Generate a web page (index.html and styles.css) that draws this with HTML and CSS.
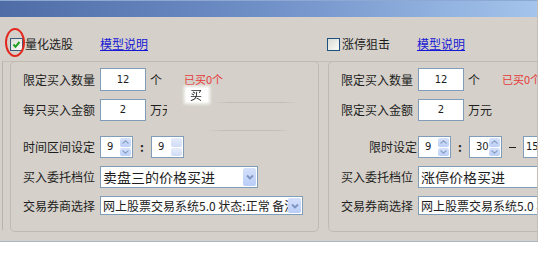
FILE: index.html
```html
<!DOCTYPE html>
<html lang="zh-CN">
<head>
    <meta charset="UTF-8">
    <title>量化选股</title>
    <link rel="stylesheet" href="styles.css">
</head>
<body>
    <div class="window">
        <div class="titlebar"></div>
        <div class="heads">
            <div class="head">
                <span class="mark"></span>
                <span class="check on"><svg width="9" height="9" viewBox="0 0 9 9"><polyline points="1.5,4.5 3.5,6.8 7.5,2" fill="none" stroke="#21a121" stroke-width="2"/></svg></span>
                <span class="head-title">量化选股</span>
                <a class="link" href="#">模型说明</a>
            </div>
            <div class="head">
                <span class="check"></span>
                <span class="head-title">涨停狙击</span>
                <a class="link" href="#">模型说明</a>
            </div>
        </div>
        <div class="panels">
            <div class="group">
                <span class="ghost ghost-a"></span>
                <span class="ghost ghost-b"></span>
                <span class="tip">买<i></i></span>
                <div class="row tall">
                    <span class="label">限定买入数量</span>
                    <span class="box">12</span>
                    <span class="unit">个</span>
                    <span class="bought">已买0个</span>
                </div>
                <div class="row">
                    <span class="label">每只买入金额</span>
                    <span class="box">2</span>
                    <span class="unit cut">万元</span>
                </div>
                <div class="row time">
                    <span class="label">时间区间设定</span>
                    <span class="spin"><span class="spin-val">9</span><span class="spin-btns"><b><svg width="7" height="4" viewBox="0 0 7 4"><polyline points="0.5,3.5 3.5,0.8 6.5,3.5" fill="none" stroke="#8aa0c6" stroke-width="1.2"/></svg></b><b><svg width="7" height="4" viewBox="0 0 7 4"><polyline points="0.5,0.5 3.5,3.2 6.5,0.5" fill="none" stroke="#8aa0c6" stroke-width="1.2"/></svg></b></span></span>
                    <span class="colon">:</span>
                    <span class="spin faded"><span class="spin-val">9</span><span class="spin-btns"><b></b><b></b></span></span>
                </div>
                <div class="row">
                    <span class="label">买入委托档位</span>
                    <span class="select wide-a"><span class="select-text big">卖盘三的价格买进</span><span class="drop"><svg width="8" height="6" viewBox="0 0 8 6"><polyline points="1,1.5 4,4.5 7,1.5" fill="none" stroke="#7d93c0" stroke-width="1.8"/></svg></span></span>
                </div>
                <div class="row short">
                    <span class="label">交易券商选择</span>
                    <span class="select wide-b"><span class="select-text">网上股票交易系统5.0 状态:正常 备注</span><span class="drop"><svg width="8" height="6" viewBox="0 0 8 6"><polyline points="1,1.5 4,4.5 7,1.5" fill="none" stroke="#7d93c0" stroke-width="1.8"/></svg></span></span>
                </div>
            </div>
            <div class="group">
                <div class="row tall">
                    <span class="label">限定买入数量</span>
                    <span class="box">12</span>
                    <span class="unit">个</span>
                    <span class="bought">已买0个</span>
                </div>
                <div class="row">
                    <span class="label">限定买入金额</span>
                    <span class="box">2</span>
                    <span class="unit">万元</span>
                </div>
                <div class="row time">
                    <span class="label right">限时设定</span>
                    <span class="spin"><span class="spin-val">9</span><span class="spin-btns"><b><svg width="7" height="4" viewBox="0 0 7 4"><polyline points="0.5,3.5 3.5,0.8 6.5,3.5" fill="none" stroke="#8aa0c6" stroke-width="1.2"/></svg></b><b><svg width="7" height="4" viewBox="0 0 7 4"><polyline points="0.5,0.5 3.5,3.2 6.5,0.5" fill="none" stroke="#8aa0c6" stroke-width="1.2"/></svg></b></span></span>
                    <span class="colon">:</span>
                    <span class="spin"><span class="spin-val">30</span><span class="spin-btns"><b><svg width="7" height="4" viewBox="0 0 7 4"><polyline points="0.5,3.5 3.5,0.8 6.5,3.5" fill="none" stroke="#8aa0c6" stroke-width="1.2"/></svg></b><b><svg width="7" height="4" viewBox="0 0 7 4"><polyline points="0.5,0.5 3.5,3.2 6.5,0.5" fill="none" stroke="#8aa0c6" stroke-width="1.2"/></svg></b></span></span>
                    <span class="dash"></span>
                    <span class="spin"><span class="spin-val tight">15</span><span class="spin-btns"><b></b><b></b></span></span>
                </div>
                <div class="row">
                    <span class="label">买入委托档位</span>
                    <span class="select wide-c"><span class="select-text big">涨停价格买进</span></span>
                </div>
                <div class="row short">
                    <span class="label">交易券商选择</span>
                    <span class="select wide-c"><span class="select-text">网上股票交易系统5.0 状态:正常</span></span>
                </div>
            </div>
        </div>
    </div>
</body>
</html>
```

FILE: styles.css
```css
* {
    margin: 0;
    padding: 0;
    box-sizing: border-box;
}
body {
    background: #fff;
    font-family: "Noto Sans CJK SC", "Noto Sans", sans-serif;
    font-size: 12px;
    color: #1e1e1e;
    line-height: 1;
}
.window {
    width: 538px;
    height: 242px;
    background: #d5d1ca;
    border-right: 1px solid #c3bfb8;
    border-bottom: 1px solid #a9b5c4;
    overflow: hidden;
}
.titlebar {
    height: 17px;
    background: linear-gradient(to right, #4f6ca7, #7090c8 50%, #a4c4ec);
    border-top: 1px solid #8ea8d4;
}
.heads { display: flex; gap: 10px; padding-left: 10px; height: 44px; }
.head { position: relative; display: flex; align-items: center; width: 307px; flex-shrink: 0; padding-top: 10px; }
.check {
    width: 13px; height: 13px;
    border: 1px solid #1c5180;
    background: linear-gradient(135deg, #dcdcd5, #fbfbf9);
    display: flex; align-items: center; justify-content: center;
}
.check.on { border-color: #3b5c7a; }
.mark {
    position: absolute; left: -5px; top: 11px;
    width: 20px; height: 29px;
    border: 2px solid #e2281f; border-radius: 50%;
}
.head-title { margin-left: 2px; width: 48px; font-size: 12px; }
.link { margin-left: 27px; color: #1818d4; text-decoration: underline; font-size: 12px; }

.panels {
    display: flex; gap: 9px;
    margin-left: 2px;
    padding-left: 7px;
    border-left: 1px solid #b9b5ad;
    border-top: 1px solid #c2beb6;
    height: 169px;
}
.group {
    position: relative;
    width: 309px; height: 171px; flex-shrink: 0;
    margin-top: -1px;
    border: 1px solid #bfbbb3;
    border-radius: 5px;
    padding: 6px 0 0 12px;
    display: flex; flex-direction: column; gap: 8px;
}
.row { display: flex; align-items: center; height: 22px; white-space: nowrap; }
.row.tall { height: 23px; }
.row.time { margin-top: 7px; }
.row.short { height: 19px; }
.label { width: 77px; flex-shrink: 0; font-size: 12px; }
.label.right { text-align: right; padding-right: 1px; }
.box {
    width: 46px; height: 100%;
    background: #fff; border: 1px solid #7f9db9;
    display: flex; align-items: center; justify-content: center;
    font-family: "DejaVu Sans", sans-serif; font-size: 10px;
}
.unit { margin-left: 4px; font-size: 12px; }
.unit.cut { width: 17px; overflow: hidden; }
.bought { margin-left: 22px; color: #e53a3a; font-size: 11px; }

.spin {
    width: 33px; height: 100%; flex-shrink: 0;
    display: flex; background: #fff; border: 1px solid #7f9db9;
}
.spin-val { flex: 1; padding-left: 6px; display: flex; align-items: center; font-family: "DejaVu Sans", sans-serif; font-size: 10px; }
.spin-val.tight { padding-left: 2px; }
.spin-btns { width: 12px; display: flex; flex-direction: column; gap: 1px; padding: 1px 1px 1px 0; }
.spin-btns b {
    flex: 1; border-radius: 2px;
    background: linear-gradient(#d6e2fb, #bccff6);
    display: flex; align-items: center; justify-content: center;
}
.spin.faded .spin-btns b { background: linear-gradient(#e6edfb, #cfdbf6); }
.colon { width: 18px; text-align: center; font-weight: bold; font-size: 12px; }
.dash { width: 7px; height: 1px; background: #222; margin: 0 7px; }

.select {
    height: 100%; display: flex; align-items: center;
    background: #fff; border: 1px solid #7f9db9;
    padding-left: 2px; flex-shrink: 0;
}
.wide-a { width: 158px; }
.wide-b { width: 203px; }
.wide-c { width: 200px; }
.select-text { flex: 1; overflow: hidden; font-size: 12px; }
.select-text.big { font-size: 14px; }
.drop {
    width: 13px; height: calc(100% - 2px); margin-right: 1px;
    border-radius: 2px;
    background: linear-gradient(#d4e0fb, #b9cdf6);
    display: flex; align-items: center; justify-content: center;
}

.tip {
    position: absolute; left: 175px; top: 26px;
    padding: 1px 6px 1px 4px;
    background: #fff; font-size: 12px;
    box-shadow: 0 0 3px 2px rgba(255,255,255,0.9);
    filter: blur(0.3px);
}
.ghost {
    position: absolute; height: 1px;
    background: linear-gradient(to right, rgba(190,186,178,0), #c3bfb7 20%, #c3bfb7 80%, rgba(190,186,178,0));
}
.ghost-a { left: 202px; top: 40px; width: 86px; }
.ghost-b { left: 195px; top: 68px; width: 86px; }
```
